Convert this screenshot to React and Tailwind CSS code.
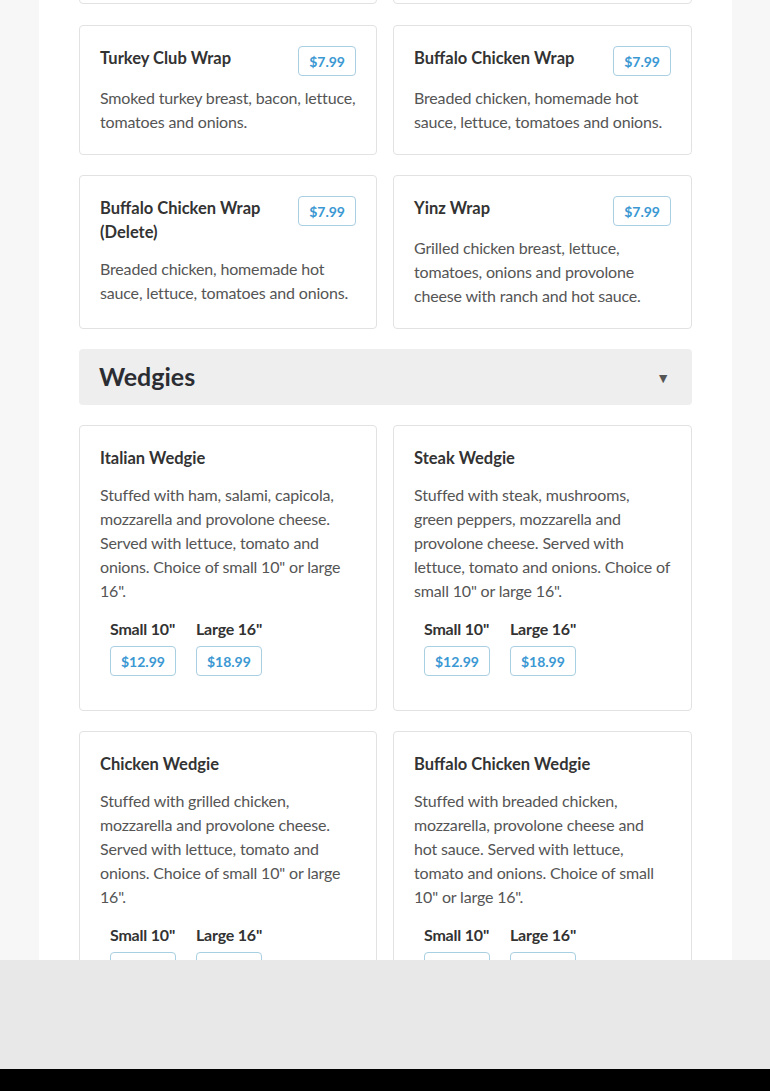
const wraps = [
  [
    { name: "Turkey Club Wrap", price: "$7.99", desc: "Smoked turkey breast, bacon, lettuce, tomatoes and onions." },
    { name: "Buffalo Chicken Wrap", price: "$7.99", desc: "Breaded chicken, homemade hot sauce, lettuce, tomatoes and onions." },
  ],
  [
    { name: "Buffalo Chicken Wrap (Delete)", price: "$7.99", desc: "Breaded chicken, homemade hot sauce, lettuce, tomatoes and onions." },
    { name: "Yinz Wrap", price: "$7.99", desc: "Grilled chicken breast, lettuce, tomatoes, onions and provolone cheese with ranch and hot sauce." },
  ],
];

const wedgies = [
  [
    { name: "Italian Wedgie", desc: 'Stuffed with ham, salami, capicola, mozzarella and provolone cheese. Served with lettuce, tomato and onions. Choice of small 10" or large 16".', small: "$12.99", large: "$18.99" },
    { name: "Steak Wedgie", desc: 'Stuffed with steak, mushrooms, green peppers, mozzarella and provolone cheese. Served with lettuce, tomato and onions. Choice of small 10" or large 16".', small: "$12.99", large: "$18.99" },
  ],
  [
    { name: "Chicken Wedgie", desc: 'Stuffed with grilled chicken, mozzarella and provolone cheese. Served with lettuce, tomato and onions. Choice of small 10" or large 16".', small: "$12.99", large: "$18.99" },
    { name: "Buffalo Chicken Wedgie", desc: 'Stuffed with breaded chicken, mozzarella, provolone cheese and hot\u00a0sauce. Served with lettuce, tomato and onions. Choice of small 10" or large 16".', small: "$12.99", large: "$18.99" },
  ],
];

function Price({ children }) {
  return (
    <span className="inline-flex h-[30px] items-center rounded border border-[#a9cfe3] px-[10px] text-[14px] font-bold text-[#3b98d3]">
      {children}
    </span>
  );
}

function WrapCard({ item }) {
  return (
    <div className="rounded border border-[#e2e2e2] bg-white p-5">
      <div className="flex items-start justify-between gap-4">
        <h3 className="pb-[3px] text-[16.5px] font-bold leading-6 text-[#333]">{item.name}</h3>
        <div className="shrink-0"><Price>{item.price}</Price></div>
      </div>
      <p className="mt-[10px] text-[16px] leading-6 tracking-[-0.17px] text-[#555]">{item.desc}</p>
    </div>
  );
}

function WedgieCard({ item }) {
  return (
    <div className="rounded border border-[#e2e2e2] bg-white px-5 pt-5 pb-[34px]">
      <h3 className="pb-[3px] text-[16.5px] font-bold leading-6 text-[#333]">{item.name}</h3>
      <p className="mt-[10px] text-[16px] leading-6 tracking-[-0.17px] text-[#555]">{item.desc}</p>
      <div className="mt-[14px] flex">
        {[["Small 10\"", item.small], ["Large 16\"", item.large]].map(([label, price]) => (
          <div key={label} className="mx-[10px] flex flex-col items-start">
            <span className="text-[16px] font-bold leading-6 tracking-[-0.2px] text-[#333]">{label}</span>
            <div className="mt-[5px]"><Price>{price}</Price></div>
          </div>
        ))}
      </div>
    </div>
  );
}

export default function App() {
  return (
    <div className="min-h-screen bg-[#f7f7f7] font-['Lato',sans-serif]">
      <div className="ml-[39px] h-[1091px] w-[693px] overflow-hidden bg-white px-10">
        {/* tail of previous row */}
        <div className="-mt-[101px] mb-[21px] grid grid-cols-[298px_1fr] gap-4">
          <div className="h-[105px] rounded border border-[#e2e2e2]" />
          <div className="h-[105px] rounded border border-[#e2e2e2]" />
        </div>

        {wraps.map((row, i) => (
          <div key={i} className="mb-[20px] grid grid-cols-[298px_1fr] gap-4">
            {row.map((item) => <WrapCard key={item.name} item={item} />)}
          </div>
        ))}

        <div className="mb-[20px] flex h-[56px] items-center justify-between rounded bg-[#eeeeee] px-5">
          <h2 className="text-[25px] font-bold text-[#2b2d33]">Wedgies</h2>
          <span className="mr-[2px] text-[14px] text-[#555]">▼</span>
        </div>

        {wedgies.map((row, i) => (
          <div key={i} className="mb-[20px] grid grid-cols-[298px_1fr] gap-4">
            {row.map((item) => <WedgieCard key={item.name} item={item} />)}
          </div>
        ))}
      </div>

      <div className="fixed inset-x-0 bottom-0">
        <div className="h-[109px] bg-[#e8e8e8]" />
        <div className="h-[22px] bg-black" />
      </div>
    </div>
  );
}
